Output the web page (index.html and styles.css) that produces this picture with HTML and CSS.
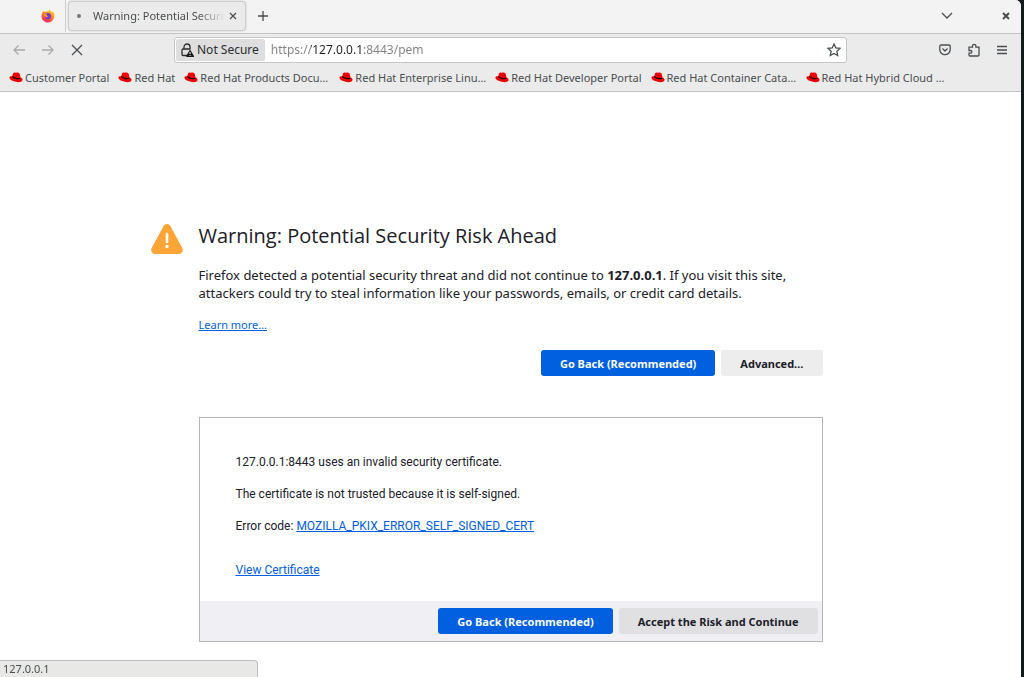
FILE: index.html
```html
<!DOCTYPE html>
<html lang="en">
<head>
    <meta charset="UTF-8">
    <meta name="viewport" content="width=device-width, initial-scale=1.0">
    <title>Warning: Potential Security Risk Ahead</title>
    <link rel="stylesheet" href="styles.css">
</head>

<body>
    <!-- Shared shapes -->
    <svg class="defs" aria-hidden="true">
        <symbol id="hat" viewBox="0 0 14 12">
            <path fill="#f00000" d="M3.800 3.300C4.200 1.800 5 1.400 6.300 1.700c.8.2 1.200 0 2-.1C9.800 1.500 10.500 2.200 10.900 3.700l.5 2.600c1.700.8 2.500 1.900 2.100 3-.6 1.800-3.500 2.300-6.800 1.500C3.300 10 .5 8.500.4 6.700.3 5.500 1.500 5 3.300 5.300z"/>
            <path fill="none" stroke="#200" stroke-width="1.200" d="M3.300 5.500c1.400 1.700 5.600 2.900 8 1.700"/>
        </symbol>
    </svg>

    <div class="browser">
        <!-- Tab strip -->
        <div class="tab-strip">
            <button class="icon-button firefox-view" aria-label="Firefox View">
                <svg width="14" height="14" viewBox="0 0 14 14">
                    <defs>
                        <linearGradient id="flame" x1="0.8" y1="0" x2="0.3" y2="1">
                            <stop offset="0" stop-color="#ffe226"/>
                            <stop offset="0.45" stop-color="#ff8a16"/>
                            <stop offset="1" stop-color="#f5156c"/>
                        </linearGradient>
                    </defs>
                    <path fill="url(#flame)" d="M1.500 3.500 2.800 2l.9 1C5 2.200 6.300 2 7.300 2.400 7.500 1.500 8 .8 8.800.3c.2 1.500 1.500 2 2.300 3l.6-1c1.300 1.500 1.900 3.300 1.600 5.300C12.900 11 10.200 13.500 7 13.500S.8 11 .6 7.500c0-1.500.3-2.900.9-4z"/>
                    <circle cx="7" cy="7.200" r="3.100" fill="#7139d8"/>
                    <path fill="#ff9a1f" d="M2.800 5.300c1.400-.6 2.700-.3 3.700.4L5.300 6.900c1 .1 1.600.4 1.700 1-1.200 1-3.300.5-4.200-2.600z"/>
                </svg>
            </button>
            <div class="tab">
                <span class="tab-loading"></span>
                <span class="tab-title">Warning: Potential Security</span>
                <button class="icon-button tab-close" aria-label="Close tab">
                    <svg width="8" height="8" viewBox="0 0 8 8"><path d="M1 1l6 6M7 1L1 7"/></svg>
                </button>
            </div>
            <button class="icon-button new-tab" aria-label="New tab">
                <svg width="10" height="10" viewBox="0 0 10 10"><path d="M5 0v10M0 5h10"/></svg>
            </button>
            <button class="icon-button list-tabs" aria-label="List all tabs">
                <svg width="12" height="8" viewBox="0 0 12 8"><path d="M1 1l5 5 5-5"/></svg>
            </button>
            <button class="icon-button window-close" aria-label="Close window">
                <svg width="8" height="8" viewBox="0 0 8 8"><path d="M1 1l6 6M7 1L1 7"/></svg>
            </button>
        </div>

        <!-- Navigation toolbar -->
        <div class="toolbar">
            <div class="nav-buttons">
                <button class="icon-button" aria-label="Back" disabled>
                    <svg width="12" height="12" viewBox="0 0 12 12"><path d="M12 6H1M5.500 1.500L1 6l4.500 4.500"/></svg>
                </button>
                <button class="icon-button" aria-label="Forward" disabled>
                    <svg width="12" height="12" viewBox="0 0 12 12"><path d="M0 6h11M6.500 1.500L11 6l-4.500 4.500"/></svg>
                </button>
                <button class="icon-button" aria-label="Stop">
                    <svg width="12" height="12" viewBox="0 0 12 12"><path d="M1 1l10 10M11 1L1 11"/></svg>
                </button>
            </div>
            <div class="url-bar">
                <button class="identity">
                    <svg width="13" height="14" viewBox="0 0 13 14">
                        <path d="M3 6V4a3 3 0 0 1 6 0v2M6 12.500H2.200c-.8 0-1.200-.4-1.200-1.200V7.200C1 6.400 1.400 6 2.200 6h7.300"/>
                        <path class="solid" d="M9 6.500l4 6.500c.2.400 0 1-.6 1H5.800c-.6 0-.8-.6-.6-1z"/>
                        <path class="mark" d="M9 9v2M9 12v1"/>
                    </svg>
                    Not Secure
                </button>
                <input class="url" type="text" aria-label="Address" value="https://127.0.0.1:8443/pem" spellcheck="false">
                <button class="icon-button star" aria-label="Bookmark this page">
                    <svg width="14" height="14" viewBox="0 0 14 14"><path d="M7 1l1.800 3.900 4.200.5-3.100 2.900.8 4.200L7 10.400l-3.700 2.100.8-4.200L1 5.400l4.200-.5z"/></svg>
                </button>
            </div>
            <div class="tools">
                <button class="icon-button" aria-label="Save to Pocket">
                    <svg width="12" height="12" viewBox="0 0 12 12"><path d="M2 1h8c.7 0 1.200.5 1.200 1.200v3.300a5.200 5.200 0 0 1-10.400 0V2.200C.8 1.500 1.300 1 2 1zM3.500 4.500L6 7l2.500-2.500"/></svg>
                </button>
                <button class="icon-button" aria-label="Extensions">
                    <svg width="12" height="14" viewBox="0 0 12 14"><path d="M1 6V4.200h3.500V3a1.700 1.700 0 0 1 3.400 0v1.200H11V12c0 .6-.4 1-1 1H2c-.6 0-1-.4-1-1v-1.800h1.500a1.300 1.300 0 0 0 0-2.700H1z"/></svg>
                </button>
                <button class="icon-button" aria-label="Menu">
                    <svg width="10" height="10" viewBox="0 0 10 10"><path d="M0 1.500h10M0 5h10M0 8.500h10"/></svg>
                </button>
            </div>
        </div>

        <!-- Bookmarks toolbar -->
        <nav class="bookmarks">
            <a href="#"><svg class="hat"><use href="#hat"/></svg>Customer Portal</a>
            <a href="#"><svg class="hat"><use href="#hat"/></svg>Red Hat</a>
            <a href="#" class="long"><svg class="hat"><use href="#hat"/></svg>Red Hat Products Docu…</a>
            <a href="#" class="long"><svg class="hat"><use href="#hat"/></svg>Red Hat Enterprise Linu…</a>
            <a href="#" class="long"><svg class="hat"><use href="#hat"/></svg>Red Hat Developer Portal</a>
            <a href="#" class="long"><svg class="hat"><use href="#hat"/></svg>Red Hat Container Cata…</a>
            <a href="#" class="long"><svg class="hat"><use href="#hat"/></svg>Red Hat Hybrid Cloud …</a>
        </nav>

        <!-- Error page -->
        <main class="page">
            <div class="error">
                <svg class="warning-icon" width="32" height="30" viewBox="0 0 32 30">
                    <path fill="#ffa436" d="M12.500 2.200c1.500-2.900 5.500-2.900 7 0l11.800 21.900c1.400 2.700-.4 5.900-3.500 5.900H4.200C1.100 30-.7 26.800.7 24.100z"/>
                    <path stroke="#fff" stroke-width="2.600" stroke-linecap="round" d="M16 10v8"/>
                    <circle cx="16" cy="22.500" r="1.700" fill="#fff"/>
                </svg>
                <div class="error-body">
                    <h1>Warning: Potential Security Risk Ahead</h1>
                    <p class="description">Firefox detected a potential security threat and did not continue to <b>127.0.0.1</b>. If you visit this site, attackers could try to steal information like your passwords, emails, or credit card details.</p>
                    <p class="learn"><a href="#">Learn more…</a></p>
                    <div class="buttons">
                        <button class="button primary">Go Back (Recommended)</button>
                        <button class="button">Advanced…</button>
                    </div>

                    <section class="advanced">
                        <div class="details">
                            <p>127.0.0.1:8443 uses an invalid security certificate.</p>
                            <p>The certificate is not trusted because it is self-signed.</p>
                            <p>Error code: <a href="#">MOZILLA_PKIX_ERROR_SELF_SIGNED_CERT</a></p>
                            <p class="view"><a href="#">View Certificate</a></p>
                        </div>
                        <div class="buttons panel-buttons">
                            <button class="button primary">Go Back (Recommended)</button>
                            <button class="button">Accept the Risk and Continue</button>
                        </div>
                    </section>
                </div>
            </div>
        </main>

        <div class="status">127.0.0.1</div>
    </div>
</body>
</html>
```
FILE: styles.css
```css
* {
    box-sizing: border-box;
}

body {
    margin: 0;
    background-color: #121a1c;
    font-family: "Noto Sans", "Open Sans", sans-serif;
    font-size: 12px;
    color: #202028;
}

button,
input {
    font: inherit;
    color: inherit;
}

.defs {
    display: none;
}

.browser {
    display: flex;
    flex-direction: column;
    min-height: 100vh;
    margin-right: 3px;
    background-color: #fff;
    border-top-right-radius: 6px;
    overflow: hidden;
}

.icon-button {
    display: flex;
    align-items: center;
    justify-content: center;
    padding: 0;
    border: 0;
    background: none;
    color: #4a4e50;
}

.icon-button svg,
.identity svg {
    fill: none;
    stroke: currentColor;
    stroke-width: 1.3;
}

.icon-button:disabled {
    color: #a9abab;
}

/* Tab strip */
.tab-strip {
    display: flex;
    align-items: center;
    height: 34px;
    padding: 0 10px 2px 0;
    background-color: #f3f3f3;
    border-bottom: 1px solid #c4c4c4;
}

.firefox-view {
    width: 66px;
    height: 33px;
    padding-left: 30px;
    border-right: 1px solid #cfcfcf;
}

.firefox-view svg {
    stroke: none;
}

.tab {
    display: flex;
    align-items: center;
    width: 178px;
    height: 30px;
    margin-left: 2px;
    padding: 0 4px 0 8px;
    background-color: #ebebeb;
    border: 1px solid #cdcdcd;
    border-radius: 4px;
    box-shadow: 0 0 2px rgba(0, 0, 0, 0.2);
    color: #4a4e50;
}

.tab-loading {
    width: 4px;
    height: 4px;
    margin-right: 12px;
    border-radius: 50%;
    background-color: #777;
}

.tab-title {
    flex: 1;
    overflow: hidden;
    font-size: 11px;
    white-space: nowrap;
    mask-image: linear-gradient(to left, transparent, #000 28px);
}

.tab-close {
    width: 16px;
    height: 16px;
}

.new-tab {
    width: 34px;
    height: 30px;
}

.list-tabs {
    width: 24px;
    height: 24px;
    margin-left: auto;
}

.window-close {
    width: 10px;
    height: 24px;
    margin-left: 42px;
}

.window-close svg {
    stroke-width: 2;
}

/* Navigation toolbar */
.toolbar {
    display: grid;
    grid-template-columns: 174px 1fr 174px;
    align-items: center;
    height: 31px;
    background-color: #ebebeb;
}

.nav-buttons {
    display: flex;
    gap: 17px;
    padding-left: 13px;
}

.url-bar {
    display: flex;
    align-items: center;
    height: 26px;
    background-color: #fff;
    border: 1px solid #c6c6c6;
    border-radius: 3px;
}

.identity {
    display: flex;
    align-items: center;
    gap: 3px;
    height: 22px;
    margin-left: 1px;
    padding: 0 6px 0 5px;
    border: 0;
    border-radius: 2px;
    background-color: #dedede;
    color: #2a2c2e;
    white-space: nowrap;
}

.identity .solid {
    fill: #1a1a1a;
    stroke: none;
}

.identity .mark {
    stroke: #fff;
    stroke-width: 1;
}

/* The host part of the address is darker than the rest */
.url {
    flex: 1;
    min-width: 0;
    height: 24px;
    padding: 0 6px;
    border: 0;
    outline: 0;
    background: linear-gradient(to right, #808080 46px, #202020 46px, #202020 99px, #808080 99px);
    background-clip: text;
    -webkit-background-clip: text;
    -webkit-text-fill-color: transparent;
}

.star {
    width: 24px;
    height: 24px;
}

.tools {
    display: flex;
    align-items: center;
    justify-content: flex-end;
    gap: 17px;
    padding-right: 14px;
}

/* Bookmarks toolbar */
.bookmarks {
    display: flex;
    gap: 9px;
    height: 27px;
    padding: 0 9px 2px;
    background-color: #ebebeb;
    border-bottom: 1px solid #c4c4c4;
    font-size: 11px;
    overflow: hidden;
}

.bookmarks a {
    display: flex;
    align-items: center;
    gap: 2px;
    color: #4a4e50;
    text-decoration: none;
    white-space: nowrap;
}

.bookmarks .long {
    min-width: 146px;
}

.hat {
    width: 14px;
    height: 12px;
}

/* Error page */
.page {
    flex: 1;
    padding: 130px 24px 35px;
}

.page a {
    color: #0060df;
}

.error {
    display: grid;
    grid-template-columns: 48px 1fr;
    max-width: 720px;
    margin: 0 auto;
    padding-right: 48px;
}

.warning-icon {
    margin-top: 2px;
}

h1 {
    margin: 0;
    font-family: "Open Sans", "Noto Sans", sans-serif;
    font-size: 20px;
    font-weight: 400;
    line-height: 28px;
}

.description {
    margin: 16px 0 0;
    font-size: 13px;
    line-height: 18px;
}

.learn {
    margin: 14px 0 0;
    font-size: 11px;
    line-height: 18px;
}

.buttons {
    display: flex;
    justify-content: flex-end;
    gap: 6px;
    margin-top: 16px;
}

.button {
    height: 26px;
    padding: 0 19px;
    border: 0;
    border-radius: 3px;
    background-color: #ededee;
    font-size: 11px;
    font-weight: 700;
    white-space: nowrap;
}

.button.primary {
    background-color: #0060df;
    color: #fbfbfe;
}

.advanced {
    margin-top: 41px;
    border: 1px solid #b5b5b8;
}

.details {
    padding: 21px 36px 22px;
    font-family: Roboto, "Noto Sans", sans-serif;
}

.details p {
    margin: 14px 0 0;
    line-height: 18px;
}

.details .view {
    margin-top: 26px;
}

.panel-buttons {
    margin-top: 0;
    padding: 7px 4px;
    background-color: #f0f0f4;
}

.panel-buttons .button:not(.primary) {
    background-color: #e0e0e3;
}

/* Link target shown over the page */
.status {
    position: fixed;
    bottom: 0;
    left: 0;
    width: 258px;
    padding-left: 3px;
    background-color: #e8e8e7;
    border: 1px solid #bcbcbc;
    border-width: 1px 1px 0 0;
    border-top-right-radius: 4px;
    color: #4a4e50;
    font-size: 11px;
    line-height: 16px;
}
```
